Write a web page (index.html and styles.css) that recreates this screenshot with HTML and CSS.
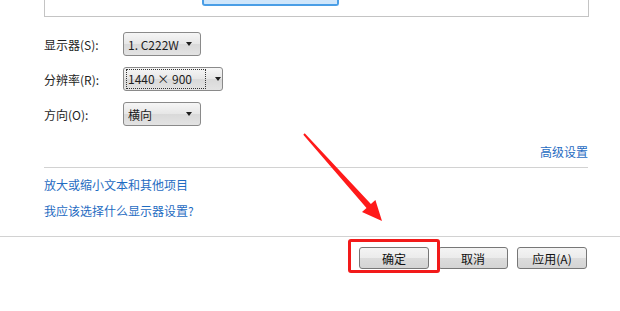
FILE: index.html
```html
<!DOCTYPE html>
<html lang="zh-CN">
<head>
    <meta charset="UTF-8">
    <title>屏幕分辨率</title>
    <link rel="stylesheet" href="styles.css">
</head>
<body>

    <div class="preview">
        <div class="monitor"></div>
    </div>

    <div class="fields">
        <label class="field-label">显示器(S):</label>
        <div class="combo combo-monitor">
            <span class="combo-text">1. C222W</span>
            <span class="combo-arrow"></span>
        </div>

        <label class="field-label">分辨率(R):</label>
        <div class="combo combo-res">
            <span class="combo-text focused">1440 × 900</span>
            <span class="combo-arrow"></span>
        </div>

        <label class="field-label">方向(O):</label>
        <div class="combo combo-orient">
            <span class="combo-text">横向</span>
            <span class="combo-arrow"></span>
        </div>
    </div>

    <div class="advanced">
        <a href="#" class="link">高级设置</a>
    </div>

    <div class="links">
        <a href="#" class="link">放大或缩小文本和其他项目</a>
        <a href="#" class="link">我应该选择什么显示器设置?</a>
    </div>

    <div class="footer">
        <button class="btn">确定</button>
        <button class="btn">取消</button>
        <button class="btn">应用(A)</button>
    </div>

    <!-- annotation -->
    <div class="mark"></div>
    <svg class="arrow" width="620" height="311" viewBox="0 0 620 311">
        <polygon fill="#ff1a1a" points="303.3,134.7 304.7,133.3 370.9,204.1 375.4,200.1 382,221 362,212.1 366.5,208.1"/>
    </svg>

</body>
</html>
```

FILE: styles.css
```css
* {
    box-sizing: border-box;
    margin: 0;
    padding: 0;
}
body {
    font-family: "Noto Sans CJK SC", "Microsoft YaHei", sans-serif;
    font-size: 12px;
    color: #1e1e1e;
    background: #fff;
    width: 620px;
    height: 311px;
    position: relative;
    overflow: hidden;
}

/* monitor preview */
.preview {
    margin: 0 31px 0 44px;
    height: 17px;
    border: 1px solid #c4c4c4;
    border-top: none;
    padding-left: 157px;
}
.monitor {
    width: 137px;
    height: 6px;
    background: #cfe6fb;
    border: 2px solid #4a9ee6;
    border-top: none;
    border-radius: 0 0 3px 3px;
}

/* fields */
.fields {
    display: grid;
    grid-template-columns: 79px auto;
    row-gap: 11px;
    align-items: center;
    justify-items: start;
    margin: 15px 0 0 44px;
}
.field-label {
    font-size: 12px;
}
.combo {
    display: flex;
    align-items: center;
    height: 24px;
    border: 1px solid #8a8a8a;
    border-radius: 3px;
    background: linear-gradient(#f6f6f6, #e6e6e6 50%, #d9d9d9 51%, #e3e3e3);
    padding: 0 8px 0 4px;
}
.combo-monitor { width: 78px; }
.combo-res { width: 100px; padding-left: 2px; }
.combo-orient { width: 78px; }
.combo-text {
    flex: 1;
    font-size: 12px;
    white-space: nowrap;
}
.combo-text.focused {
    flex: 0 0 80px;
    height: 20px;
    line-height: 18px;
    border: 1px dotted #333;
    margin-right: 9px;
    padding-left: 1px;
}
.combo-arrow {
    width: 0;
    height: 0;
    border-left: 3.5px solid transparent;
    border-right: 3.5px solid transparent;
    border-top: 4px solid #1e1e1e;
}

/* links */
.link {
    color: #1f6cc2;
    text-decoration: none;
    font-size: 12px;
}
.advanced {
    display: flex;
    justify-content: flex-end;
    margin: 17px 32px 0 44px;
    padding-bottom: 6px;
    border-bottom: 1px solid #d2d2d2;
    line-height: 18px;
}
.links {
    display: flex;
    flex-direction: column;
    gap: 8px;
    margin: 8px 0 0 44px;
    line-height: 18px;
}

/* footer */
.footer {
    display: flex;
    justify-content: flex-end;
    gap: 9px;
    margin-top: 16px;
    padding: 10px 33px 0 0;
    border-top: 1px solid #d2d2d2;
}
.btn {
    width: 70px;
    height: 22px;
    font-family: inherit;
    font-size: 12px;
    color: #111;
    border: 1px solid #777;
    border-radius: 3px;
    background: linear-gradient(#f4f4f4, #ebebeb 50%, #dcdcdc 51%, #d4d4d4);
}

/* annotation */
.mark {
    position: absolute;
    left: 348px;
    top: 239px;
    width: 92px;
    height: 34px;
    border: 3px solid #f21a1a;
    border-radius: 3px;
}
.arrow {
    position: absolute;
    left: 0;
    top: 0;
    pointer-events: none;
}
```
